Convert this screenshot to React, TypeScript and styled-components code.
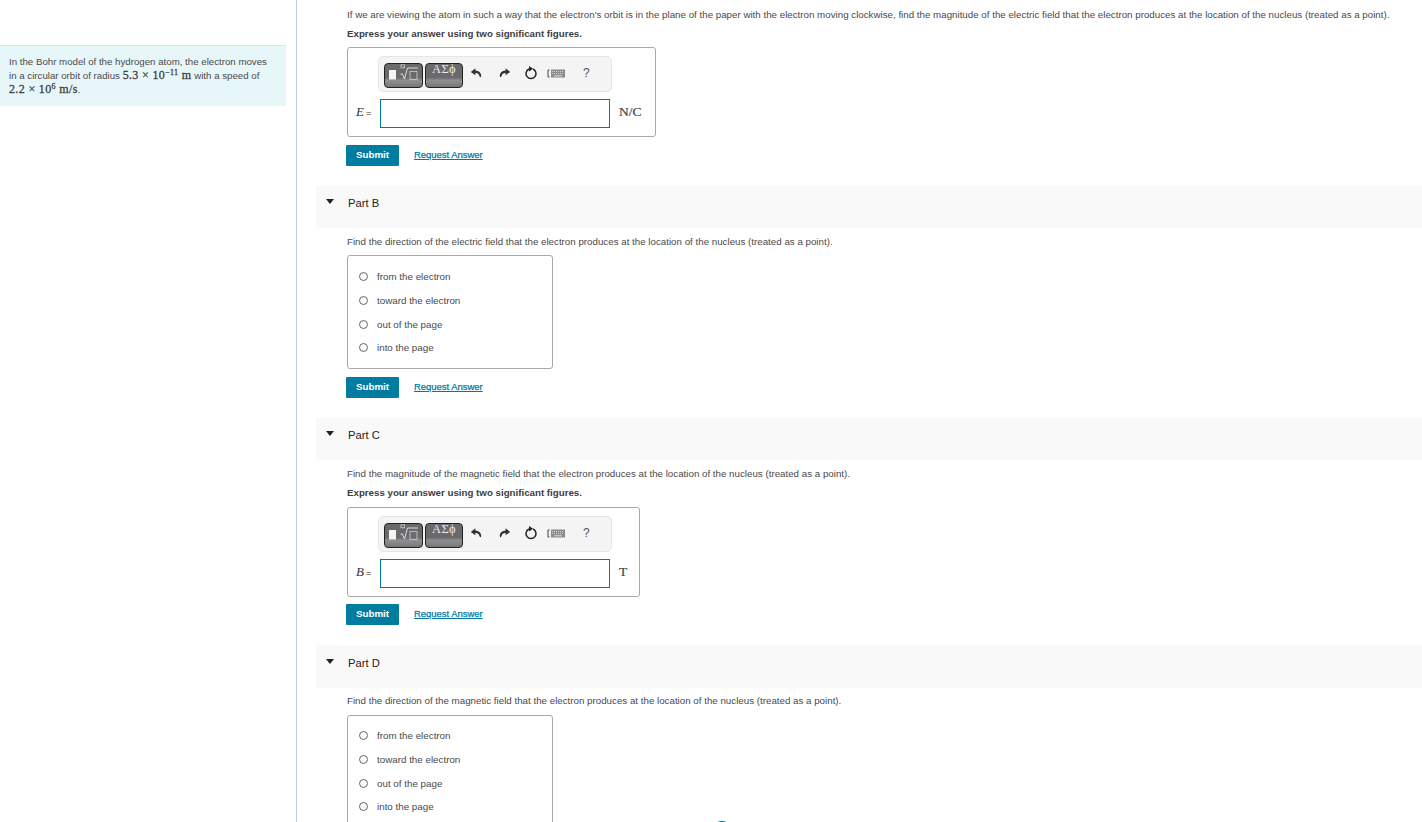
import React from "react";
import styled, { createGlobalStyle } from "styled-components";

const Global = createGlobalStyle`
  html, body { margin: 0; padding: 0; background: #fff; height: 100%; overflow: hidden; }
  body { font-family: "Liberation Sans", Arial, sans-serif; color: #333; }
  #root { height: 822px; overflow: hidden; }
`;

const Page = styled.div`
  display: flex;
  height: 822px;
  overflow: hidden;
  position: relative;
`;
const Sidebar = styled.aside`
  width: 296px;
  flex: none;
  border-right: 1px solid #bcd0dc;
  padding-top: 45px;
  box-sizing: content-box;
`;
const Intro = styled.div`
  width: 286px;
  height: 61px;
  box-sizing: border-box;
  background: #e7f6f9;
  border-top: 1px solid #d5e4e8;
  padding: 9px 14px 0 9px;
  font-size: 9.7px;
  line-height: 13.8px;
  color: #4a4a4a;
`;
const M = styled.span`
  font-family: "Liberation Serif", serif;
  font-size: 12px;
  font-weight: 400;
  letter-spacing: 0.35px;
  -webkit-text-stroke: 0.3px #444;
  color: #3c3c3c;
  white-space: nowrap;
`;
const Sup = styled.sup`
  font-size: 8px;
  line-height: 0;
  vertical-align: 4px;
`;
const Main = styled.main`
  flex: 1;
  min-width: 0;
  padding: 0 0 0 19px;
`;
const Block = styled.div`
  padding-left: 31px;
`;
const Prompt = styled.p<{ $top: number }>`
  margin: ${(p) => p.$top}px 0 0;
  font-size: 9.75px;
  line-height: 12px;
  color: #4a4a4a;
  white-space: nowrap;
`;
const Hint = styled.p`
  margin: 7px 0 0;
  font-size: 9.72px;
  line-height: 12px;
  font-weight: 700;
  color: #3d3d3d;
`;
const AnswerBox = styled.div<{ $w: number; $top: number; $h: number }>`
  box-sizing: border-box;
  width: ${(p) => p.$w}px;
  height: ${(p) => p.$h}px;
  margin-top: ${(p) => p.$top}px;
  border: 1px solid #a9a9a9;
  border-radius: 3px;
  padding: 8px 0 0 31px;
`;
const Toolbar = styled.div`
  box-sizing: border-box;
  width: 234px;
  height: 36px;
  margin-left: -1px;
  background: #f4f4f4;
  border: 1px solid #e6e6e6;
  border-radius: 5px;
  display: flex;
  align-items: center;
  padding: 0 0 0 5px;
`;
const ToolButton = styled.div<{ $w: number; $mr: number }>`
  box-sizing: border-box;
  width: ${(p) => p.$w}px;
  height: 25px;
  margin: 3px ${(p) => p.$mr}px 0 0;
  border: 1px solid #222;
  border-radius: 4px;
  background: linear-gradient(#6a6a6c 0 58%, #8f8f91 72%, #777 100%);
  color: #e8e8e8;
  font-family: "Liberation Serif", serif;
  font-size: 12.5px;
  letter-spacing: 0.3px;
  text-align: center;
  line-height: 11px;
  display: flex;
  justify-content: center;
  align-items: flex-start;
`;
const Icon = styled.svg<{ $ml: number }>`
  flex: none;
  margin: 0 0 2px ${(p) => p.$ml}px;
  display: block;
`;
const Help = styled.span`
  margin: 0 0 2px 18px;
  font-size: 12px;
  color: #555;
`;
const InputRow = styled.div`
  display: flex;
  align-items: center;
  margin: 6px 0 0 -24px;
  height: 30px;
`;
const Label = styled.span`
  width: 24px;
  flex: none;
  margin-left: 1px;
  padding-bottom: 2px;
  font-family: "Liberation Serif", serif;
  font-size: 13px;
  color: #333;
  white-space: nowrap;
`;
const Eq = styled.span`
  font-family: "Liberation Sans", sans-serif;
  font-size: 9.5px;
  font-style: normal;
  margin-left: 2px;
`;
const Field = styled.div`
  box-sizing: border-box;
  width: 230px;
  height: 29px;
  flex: none;
  border: 1px solid #007c9e;
  background: #fff;
`;
const Unit = styled.span`
  margin-left: 9px;
  padding-bottom: 2px;
  font-family: "Liberation Serif", serif;
  font-size: 13.5px;
  font-weight: 400;
  -webkit-text-stroke: 0.2px #444;
  color: #444;
`;
const Actions = styled.div<{ $top: number }>`
  display: flex;
  align-items: center;
  margin: ${(p) => p.$top}px 0 0 -1px;
`;
const Submit = styled.div`
  width: 53px;
  height: 21px;
  background: #007c9e;
  border-radius: 1px;
  color: #fff;
  font-size: 9.8px;
  font-weight: 700;
  line-height: 20px;
  text-align: center;
`;
const RequestLink = styled.a`
  margin: 0 0 2px 15px;
  color: #007c9e;
  font-size: 9.45px;
  font-weight: 400;
  -webkit-text-stroke: 0.25px #007c9e;
  text-decoration: underline;
  text-underline-offset: 1px;
`;
const PartBand = styled.div<{ $top: number; $h: number }>`
  height: ${(p) => p.$h}px;
  box-sizing: border-box;
  margin-top: ${(p) => p.$top}px;
  background: #f9f9f9;
  display: flex;
  align-items: flex-start;
  padding: ${(p) => p.$h - 31}px 0 0 10px;
`;
const Caret = styled.span`
  width: 0;
  height: 0;
  border-left: 4.5px solid transparent;
  border-right: 4.5px solid transparent;
  border-top: 5px solid #222;
  margin-top: 2px;
`;
const PartTitle = styled.h2`
  margin: 0 0 0 14px;
  font-size: 11.2px;
  line-height: 12px;
  font-weight: 400;
  color: #222;
`;
const Choices = styled.div<{ $top: number; $h: number; $pad: number }>`
  box-sizing: border-box;
  width: 206px;
  height: ${(p) => p.$h}px;
  margin-top: ${(p) => p.$top}px;
  border: 1px solid #a9a9a9;
  border-radius: 3px;
  padding: ${(p) => p.$pad}px 0 0 11px;
`;
const Choice = styled.label`
  display: flex;
  align-items: center;
  height: 23.7px;
  font-size: 9.8px;
  color: #4a4a4a;
`;
const Radio = styled.span`
  box-sizing: border-box;
  width: 9px;
  height: 9px;
  border: 1px solid #666;
  border-radius: 50%;
  margin-right: 9px;
  background: #fff;
`;
const Spinner = styled.div`
  position: absolute;
  left: 711px;
  top: 821px;
  width: 22px;
  height: 22px;
  border-radius: 50%;
  background: #007c9e;
`;

const RootGlyph = () => (
  <svg width="36" height="22" viewBox="0 0 36 22" fill="none">
    <rect x="3" y="6" width="7" height="9.5" fill="#f4f4f4" />
    <path d="M14.5 10.5l1.8-.8 2.2 5.3 3-11h10.5" stroke="#e8e8e8" strokeWidth="0.9" />
    <rect x="15" y="0.8" width="3.5" height="3" stroke="#cfcfcf" strokeWidth="0.8" />
    <rect x="24" y="7.5" width="7" height="8" stroke="#c4c4c4" strokeWidth="0.9" />
  </svg>
);
const Undo = ({ flip, ml }: { flip?: boolean; ml: number }) => (
  <Icon $ml={ml} width="12" height="12" viewBox="0 0 12 12">
    <path
      transform={flip ? "translate(12 0) scale(-1 1)" : undefined}
      d="M5.4 1.2L.8 4.9l4.6 3.4V6c2.1-.1 3.6.7 4.2 3.6.9.9 1.6.7 1.6-.6 0-3.2-2.4-5.3-5.8-5.500z"
      fill="#333"
    />
  </Icon>
);
const Reset = () => (
  <Icon $ml={13} width="14" height="14" viewBox="0 0 14 14" fill="none">
    <path d="M9 3a5 5 0 1 1-4 0" stroke="#222" strokeWidth="1.5" />
    <path d="M5 0v5.5l4-2.7z" fill="#222" />
  </Icon>
);
const Keyboard = () => (
  <Icon $ml={9} width="18" height="9" viewBox="0 0 18 9" fill="none">
    <path d="M2.5 1H1v7h1.5" stroke="#444" strokeWidth="1" />
    <rect x="4" y="0.5" width="14" height="8" fill="#8a8a8a" />
    <path d="M5 2.5h12M5 4.5h12" stroke="#d8d8d8" strokeWidth="1" strokeDasharray="1 1" />
    <path d="M7 6.800h8" stroke="#e0e0e0" strokeWidth="1" />
  </Icon>
);

const Equation = ({ symbol, unit, w, top }: { symbol: string; unit: string; w: number; top: number }) => (
  <AnswerBox $w={w} $top={top} $h={90}>
    <Toolbar>
      <ToolButton $w={39} $mr={2}><RootGlyph /></ToolButton>
      <ToolButton $w={38} $mr={0}>ΑΣϕ</ToolButton>
      <Undo ml={7} />
      <Undo ml={17} flip />
      <Reset />
      <Keyboard />
      <Help>?</Help>
    </Toolbar>
    <InputRow>
      <Label><i>{symbol}</i><Eq>=</Eq></Label>
      <Field />
      <Unit>{unit}</Unit>
    </InputRow>
  </AnswerBox>
);

const ActionRow = ({ top }: { top: number }) => (
  <Actions $top={top}>
    <Submit>Submit</Submit>
    <RequestLink>Request Answer</RequestLink>
  </Actions>
);

const options = ["from the electron", "toward the electron", "out of the page", "into the page"];
const ChoiceList = ({ top, pad }: { top: number; pad: number }) => (
  <Choices $top={top} $h={114} $pad={pad}>
    {options.map((o) => (
      <Choice key={o}><Radio />{o}</Choice>
    ))}
  </Choices>
);

const Part = ({ name, top, h = 42 }: { name: string; top: number; h?: number }) => (
  <PartBand $top={top} $h={h}>
    <Caret />
    <PartTitle>{name}</PartTitle>
  </PartBand>
);

export default function App() {
  return (
    <Page>
      <Global />
      <Sidebar>
        <Intro>
          In the Bohr model of the hydrogen atom, the electron moves in a circular orbit of radius{" "}
          <M>5.3 × 10<Sup>−11</Sup> m</M> with a speed of <M>2.2 × 10<Sup>6</Sup> m/s</M>.
        </Intro>
      </Sidebar>
      <Main>
        <Block>
          <Prompt $top={9}>
            If we are viewing the atom in such a way that the electron's orbit is in the plane of the paper with the electron moving clockwise, find the magnitude of the electric field that the electron produces at the location of the nucleus (treated as a point).
          </Prompt>
          <Hint>Express your answer using two significant figures.</Hint>
          <Equation symbol="E" unit="N/C" w={309} top={7} />
          <ActionRow top={8} />
        </Block>
        <Part name="Part B" top={20} />
        <Block>
          <Prompt $top={8}>Find the direction of the electric field that the electron produces at the location of the nucleus (treated as a point).</Prompt>
          <ChoiceList top={7} pad={9} />
          <ActionRow top={8} />
        </Block>
        <Part name="Part C" top={20} />
        <Block>
          <Prompt $top={8}>Find the magnitude of the magnetic field that the electron produces at the location of the nucleus (treated as a point).</Prompt>
          <Hint>Express your answer using two significant figures.</Hint>
          <Equation symbol="B" unit="T" w={293} top={8} />
          <ActionRow top={7} />
        </Block>
        <Part name="Part D" top={20} h={43} />
        <Block>
          <Prompt $top={7}>Find the direction of the magnetic field that the electron produces at the location of the nucleus (treated as a point).</Prompt>
          <ChoiceList top={8} pad={8} />
        </Block>
      </Main>
      <Spinner />
    </Page>
  );
}
